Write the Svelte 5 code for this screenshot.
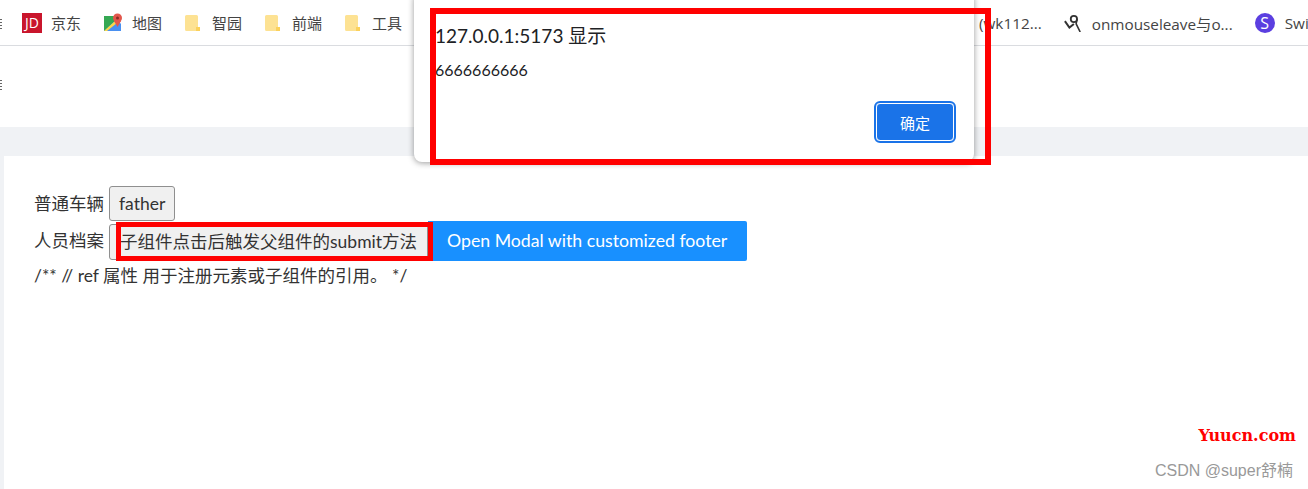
<script>
  const bookmarks = [
    { name: "京东", icon: "jd" },
    { name: "地图", icon: "map" },
    { name: "智园", icon: "folder" },
    { name: "前端", icon: "folder" },
    { name: "工具", icon: "folder" }
  ];

  function showAlert() {
    // the real page calls alert() from the child component
  }
</script>

<div class="page">
  <nav class="bookmarks">
    <span class="cut"></span>
    {#each bookmarks as b}
      <div class="bookmark bm-{b.icon}">
        {#if b.icon === "jd"}
          <span class="jd-logo">JD</span>
        {:else if b.icon === "map"}
          <svg class="icon" viewBox="0 0 20 20" width="20" height="20">
            <path d="M1 3h13v15H1z" fill="#35a853" />
            <path d="M1 18 14 6l4 5v7z" fill="#4a90f0" />
            <path d="M1 18 12 8l2 2L4 18z" fill="#fbd848" />
            <circle cx="14.500" cy="5" r="4.500" fill="#e2574c" />
            <circle cx="14.500" cy="5" r="1.500" fill="#8c2b24" />
            <path d="M11 8l3.500 6L18 8z" fill="#e2574c" />
          </svg>
        {:else}
          <svg class="icon" viewBox="0 0 16 16" width="16" height="16">
            <path d="M1 1.500A1.500 1.500 0 0 1 2.500 0h10A1.500 1.500 0 0 1 14 1.500V16H2.500A1.500 1.500 0 0 1 1 14.500z" fill="#fde293" />
            <path d="M12 12h4v4h-4z" fill="#fbd15c" />
          </svg>
        {/if}
        <span>{b.name}</span>
      </div>
    {/each}
    <div class="right">
      <span class="bm-text">(wk112...</span>
      <div class="bookmark">
        <svg class="icon" viewBox="0 0 20 20" width="18" height="18">
          <path d="M1 8l5 7 5-4" fill="none" stroke="#333" stroke-width="2.200" />
          <circle cx="11" cy="5.500" r="3.500" fill="none" stroke="#333" stroke-width="2" />
          <path d="M14.500 5.500 13.500 11 18 20" fill="none" stroke="#333" stroke-width="1.800" />
        </svg>
        <span>onmouseleave与o...</span>
      </div>
      <div class="bookmark">
        <span class="swift">S</span>
        <span>Swi</span>
      </div>
    </div>
  </nav>

  <div class="top-strip"><span class="cut"></span></div>
  <div class="band"></div>

  <main class="content">
    <div class="row first">
      普通车辆
      <button class="plain">father</button>
    </div>
    <div class="row second">
      人员档案
      <button class="plain" onclick={showAlert}>子组件点击后触发父组件的submit方法</button><button class="primary">Open Modal with customized footer</button>
    </div>
    <div class="row comment">/** // ref 属性 用于注册元素或子组件的引用。 */</div>
  </main>

  <div class="dialog">
    <div class="title">127.0.0.1:5173 显示</div>
    <div class="message">6666666666</div>
    <div class="actions"><button class="ok">确定</button></div>
  </div>

  <div class="mark mark-dialog"></div>
  <div class="mark mark-button"></div>

  <div class="site">Yuucn.com</div>
  <div class="csdn">CSDN @super舒楠</div>
</div>

<style>
  :global(body) {
    margin: 0;
    background: #fff;
    overflow: hidden;
  }

  .page {
    position: relative;
    width: 1308px;
    height: 489px;
    overflow: hidden;
    font-family: "Lato", "Noto Sans CJK SC", sans-serif;
    font-variant-ligatures: none;
    color: #333;
    display: flex;
    flex-direction: column;
  }

  /* bookmarks bar */
  .bookmarks {
    height: 45px;
    box-sizing: content-box;
    border-bottom: 1px solid #dadce0;
    display: flex;
    align-items: center;
    padding-left: 22px;
    gap: 22px;
    font-family: "Noto Sans CJK SC", "Open Sans", sans-serif;
    font-size: 15px;
    color: #444;
    flex-shrink: 0;
    position: relative;
  }

  /* sliver of the menu icon cut off by the window edge */
  .cut {
    position: absolute;
    left: 0;
    width: 2px;
    height: 10px;
    background: repeating-linear-gradient(#666 0 1px, transparent 1px 3px);
  }

  .bookmarks .cut {
    top: 19px;
  }

  .top-strip .cut {
    top: 80px;
  }

  .bookmark {
    display: flex;
    align-items: center;
    gap: 12px;
    white-space: nowrap;
  }

  .bm-jd {
    gap: 9px;
  }

  .bm-map {
    gap: 9px;
  }

  .jd-logo {
    width: 20px;
    height: 20px;
    background: #c9152c;
    color: #fff;
    font: 400 14px "Open Sans", sans-serif;
    text-align: center;
    line-height: 20px;
  }

  .right {
    position: absolute;
    left: 979px;
    top: 0;
    height: 45px;
    display: flex;
    align-items: center;
    gap: 22px;
    font-size: 15.300px;
    font-family: "Open Sans", "Noto Sans CJK SC", sans-serif;
  }

  .right .bookmark {
    gap: 10px;
  }

  .swift {
    width: 20px;
    height: 20px;
    border-radius: 50%;
    background: #5b3fe0;
    color: #fff;
    text-align: center;
    line-height: 20px;
    font-size: 16px;
  }

  .top-strip {
    height: 81px;
    flex-shrink: 0;
  }

  .band {
    height: 29px;
    background: #f0f2f5;
    flex-shrink: 0;
  }

  /* page content */
  .content {
    flex: 1;
    background: #fff;
    border-left: 4px solid #f0f2f5;
    padding: 30px;
    font-size: 17.500px;
    line-height: 24px;
    color: #333;
  }

  .row {
    white-space: nowrap;
    display: flex;
    align-items: center;
    gap: 5px;
  }

  .first {
    height: 35px;
  }

  .second {
    height: 40px;
    gap: 0;
  }

  .second .plain {
    margin: 2px 0 0 5px;
    height: 36px;
    padding: 0 10px;
  }

  .comment {
    height: 30px;
  }

  .plain {
    height: 35px;
    padding: 0 9px;
    background: #f0f0f0;
    border: 1px solid #8f8f8f;
    border-radius: 3px;
    font: inherit;
    color: #333;
  }

  .primary {
    height: 40px;
    padding: 0 20px 0 19px;
    background: #1890ff;
    color: #fff;
    border: 0;
    border-radius: 0 2px 2px 0;
    font: inherit;
    font-size: 17.700px;
  }

  /* alert dialog */
  .dialog {
    position: absolute;
    left: 414px;
    top: -8px;
    width: 560px;
    height: 170px;
    box-sizing: border-box;
    padding: 31px 20px 0 21px;
    background: #fff;
    border-radius: 8px;
    box-shadow: 0 1px 6px rgba(0, 0, 0, 0.4);
    color: #202124;
    font-family: "Lato", "Noto Sans CJK SC", sans-serif;
  }

  .title {
    font-size: 19px;
    line-height: 26px;
  }

  .message {
    font-size: 16px;
    line-height: 20px;
    margin-top: 11px;
  }

  .actions {
    display: flex;
    justify-content: flex-end;
    margin-top: 23px;
  }

  .ok {
    width: 78px;
    height: 38px;
    background: #1a73e8;
    color: #fff;
    border: 1px solid #fff;
    outline: 2px solid #1a73e8;
    border-radius: 4px;
    font: 15px "Noto Sans CJK SC", sans-serif;
  }

  /* red annotation boxes */
  .mark {
    position: absolute;
    box-sizing: border-box;
    border: 6px solid #f00;
  }

  .mark-dialog {
    left: 430px;
    top: 8px;
    width: 561px;
    height: 157px;
  }

  .mark-button {
    left: 116px;
    top: 222px;
    width: 317px;
    height: 39px;
    border-width: 5px;
  }

  .site {
    position: absolute;
    right: 12px;
    top: 426px;
    color: #f00;
    font: 700 16px "DejaVu Serif", serif;
  }

  .csdn {
    position: absolute;
    right: 15px;
    top: 461px;
    color: #999;
    font-size: 16px;
    line-height: 20px;
    font-family: "Liberation Sans", "Noto Sans CJK SC", sans-serif;
  }
</style>
